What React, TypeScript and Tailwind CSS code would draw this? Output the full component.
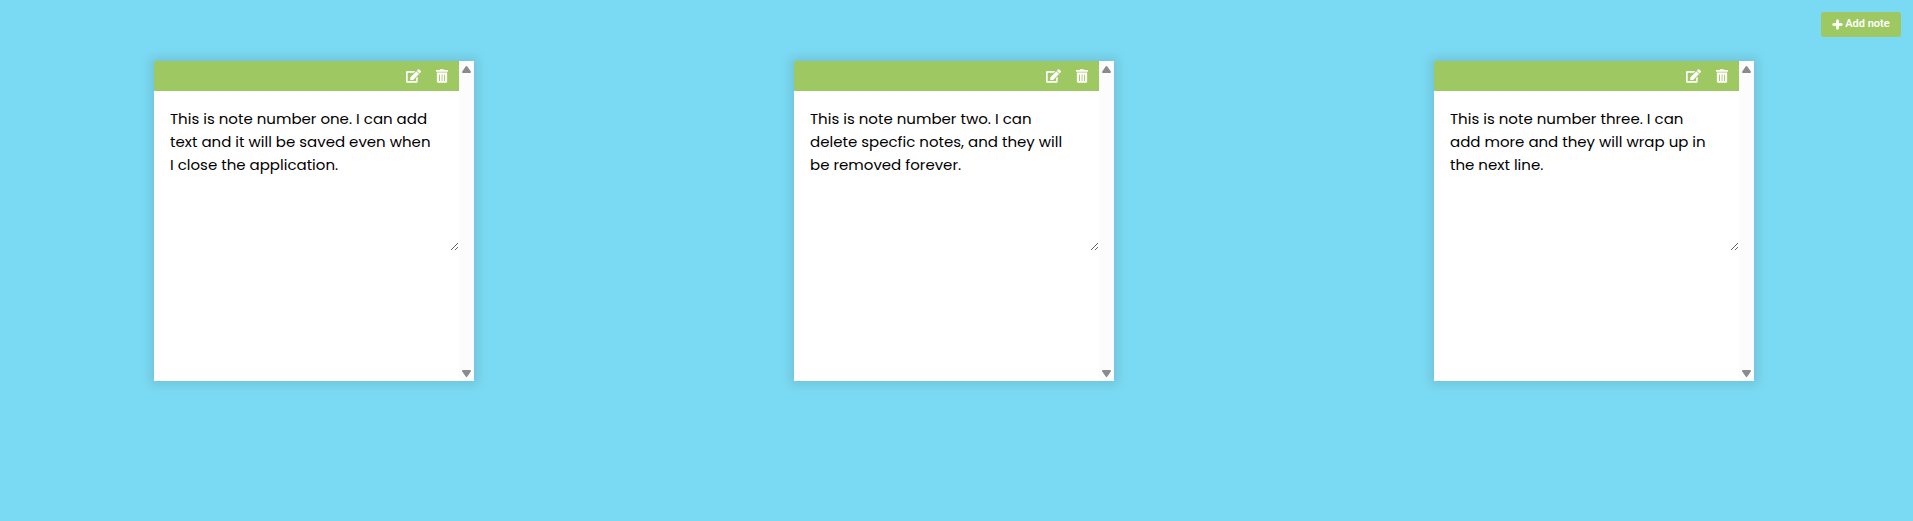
import { useState } from "react";
import { FaEdit, FaPlus, FaTrashAlt } from "react-icons/fa";

interface Note {
  id: number;
  text: string;
}

const initialNotes: Note[] = [
  {
    id: 1,
    text: "This is note number one. I can add text and it will be saved even when I close the application.",
  },
  {
    id: 2,
    text: "This is note number two. I can delete specfic notes, and they will be removed forever.",
  },
  {
    id: 3,
    text: "This is note number three. I can add more and they will wrap up in the next line.",
  },
];

function ScrollTrack() {
  return (
    <div
      aria-hidden="true"
      className="flex w-[15px] shrink-0 flex-col items-center justify-between bg-[#fcfcfc] pt-[5px] pb-1"
    >
      <svg viewBox="0 0 9 7" className="h-[7px] w-[9px] fill-[#8b8b8b]">
        <path d="M3.7.6Q4.5-.4 5.3.6L8.8 5.4Q9.4 7 8 7H1Q-.4 7 .2 5.4Z" />
      </svg>
      <svg viewBox="0 0 9 7" className="h-[7px] w-[9px] fill-[#8b8b8b]">
        <path d="M3.7 6.4Q4.5 7.4 5.3 6.4L8.8 1.6Q9.4 0 8 0H1Q-.4 0 .2 1.6Z" />
      </svg>
    </div>
  );
}

interface NoteCardProps {
  note: Note;
  onChange: (text: string) => void;
  onDelete: () => void;
}

function NoteCard({ note, onChange, onDelete }: NoteCardProps) {
  const [editing, setEditing] = useState(true);

  return (
    <article className="flex h-80 w-80 bg-white shadow-[0_0_10px_4px_rgba(0,0,0,0.1)]">
      <div className="min-w-0 flex-1">
        <div className="flex h-[30px] items-center justify-end gap-[15px] bg-[#9ec862] pr-[11px] text-white">
          <button type="button" aria-label="Edit note" onClick={() => setEditing(!editing)}>
            <FaEdit className="h-[14px] w-[15px]" />
          </button>
          <button type="button" aria-label="Delete note" onClick={onDelete}>
            <FaTrashAlt className="h-[14px] w-3" />
          </button>
        </div>
        <textarea
          aria-label={`Note ${note.id}`}
          readOnly={!editing}
          value={note.text}
          onChange={(event) => onChange(event.target.value)}
          className="block h-40 w-full resize overflow-hidden py-4 pr-6 pl-4 font-['Poppins','Inter',sans-serif] text-[15px] leading-[23px] text-black outline-none"
        />
      </div>
      <ScrollTrack />
    </article>
  );
}

export default function App() {
  const [notes, setNotes] = useState<Note[]>(initialNotes);

  const addNote = () =>
    setNotes([...notes, { id: Math.max(0, ...notes.map((n) => n.id)) + 1, text: "" }]);

  return (
    <div className="min-h-screen bg-[#7bdaf3]">
      <header className="flex justify-end px-3 pt-3">
        <button
          type="button"
          onClick={addNote}
          className="flex h-[25px] w-20 items-center justify-center gap-[2px] rounded-[3px] bg-[#9ec862] font-['Roboto',sans-serif] text-[11px] font-semibold text-white"
        >
          <FaPlus className="size-[11px] stroke-current stroke-[36]" />
          Add note
        </button>
      </header>
      <main className="flex flex-wrap justify-between gap-y-12 pt-6 pr-[159px] pb-6 pl-[154px]">
        {notes.map((note) => (
          <NoteCard
            key={note.id}
            note={note}
            onChange={(text) =>
              setNotes(notes.map((n) => (n.id === note.id ? { ...n, text } : n)))
            }
            onDelete={() => setNotes(notes.filter((n) => n.id !== note.id))}
          />
        ))}
      </main>
    </div>
  );
}
